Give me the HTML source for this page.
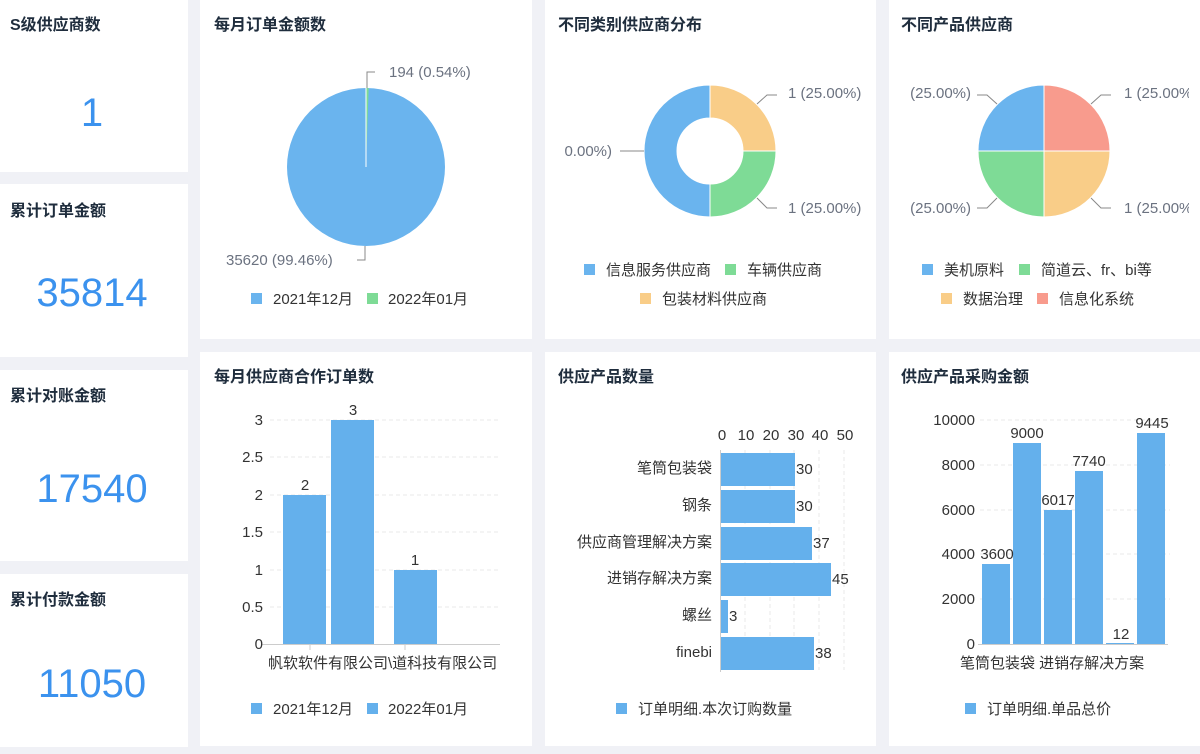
<!DOCTYPE html>
<html><head><meta charset="utf-8"><style>
html,body{margin:0;padding:0;background:#f0f1f6;width:1200px;height:754px;overflow:hidden}
svg{display:block}
text{font-family:"Liberation Sans","Noto Sans CJK SC",sans-serif}
.t{font-size:16px;font-weight:bold;fill:#1f2d3d}
.n{font-size:40px;fill:#3b92ee}
.l{font-size:15px;fill:#6b7280}
.a{font-size:15px;fill:#333}
.g{stroke:#e8e8e8;stroke-dasharray:4 3}
</style></head><body>
<svg width="1200" height="754" xmlns="http://www.w3.org/2000/svg">
<defs>
<clipPath id="c3"><rect x="545" y="0" width="320" height="340"/></clipPath>
<clipPath id="c4"><rect x="900" y="0" width="289" height="340"/></clipPath>
</defs>
<g fill="#fff">
<rect x="0" y="0" width="188" height="172"/>
<rect x="0" y="184" width="188" height="173"/>
<rect x="0" y="370" width="188" height="191"/>
<rect x="0" y="574" width="188" height="173"/>
<rect x="200" y="0" width="332" height="339"/>
<rect x="545" y="0" width="331" height="339"/>
<rect x="889" y="0" width="311" height="339"/>
<rect x="200" y="352" width="332" height="394"/>
<rect x="545" y="352" width="331" height="394"/>
<rect x="889" y="352" width="311" height="394"/>
</g>
<text class="t" x="10" y="30">S级供应商数</text>
<text class="n" x="92" y="126" text-anchor="middle" font-size="50">1</text>
<text class="t" x="10" y="216">累计订单金额</text>
<text class="n" x="92" y="306" text-anchor="middle">35814</text>
<text class="t" x="10" y="401">累计对账金额</text>
<text class="n" x="92" y="502" text-anchor="middle">17540</text>
<text class="t" x="10" y="605">累计付款金额</text>
<text class="n" x="92" y="697" text-anchor="middle">11050</text>

<!-- pie 1 -->
<text class="t" x="214" y="30">每月订单金额数</text>
<circle cx="366" cy="167" r="79" fill="#6ab4ee"/>
<path d="M366 167 L366 88 A79 79 0 0 1 368.7 88 Z" fill="#7edb96"/>
<line x1="366" y1="167" x2="366" y2="88" stroke="#fff"/>
<path d="M367 88 V72 H375" stroke="#888" fill="none"/>
<text class="l" x="389" y="77">194 (0.54%)</text>
<path d="M365 246 V260 H357" stroke="#888" fill="none"/>
<text class="l" x="226" y="265">35620 (99.46%)</text>
<rect x="251" y="293" width="11" height="11" fill="#6ab4ee"/><text class="a" x="273" y="304" fill="#333">2021年12月</text>
<rect x="367" y="293" width="11" height="11" fill="#7edb96"/><text class="a" x="388" y="304">2022年01月</text>

<!-- donut -->
<text class="t" x="558" y="30">不同类别供应商分布</text>
<g clip-path="url(#c3)">
<path d="M710 85 A66 66 0 0 0 710 217 L710 184 A33 33 0 0 1 710 118 Z" fill="#6ab4ee" stroke="#fff"/>
<path d="M710 85 A66 66 0 0 1 776 151 L743 151 A33 33 0 0 0 710 118 Z" fill="#f9cd88" stroke="#fff"/>
<path d="M776 151 A66 66 0 0 1 710 217 L710 184 A33 33 0 0 0 743 151 Z" fill="#7edb96" stroke="#fff"/>
<path d="M757 104 L767 95 H777" stroke="#888" fill="none"/>
<path d="M757 198 L767 208 H777" stroke="#888" fill="none"/>
<path d="M644 151 H620" stroke="#888" fill="none"/>
<text class="l" x="788" y="98">1 (25.00%)</text>
<text class="l" x="788" y="213">1 (25.00%)</text>
<text class="l" x="612" y="156" text-anchor="end">0.00%)</text>
</g>
<rect x="584" y="264" width="11" height="11" fill="#6ab4ee"/><text class="a" x="606" y="275">信息服务供应商</text>
<rect x="725" y="264" width="11" height="11" fill="#7edb96"/><text class="a" x="747" y="275">车辆供应商</text>
<rect x="640" y="293" width="11" height="11" fill="#f9cd88"/><text class="a" x="662" y="304">包装材料供应商</text>

<!-- pie 3 -->
<text class="t" x="901" y="30">不同产品供应商</text>
<g clip-path="url(#c4)">
<path d="M1044 151 V85 A66 66 0 0 0 978 151 Z" fill="#6ab4ee" stroke="#fff"/>
<path d="M1044 151 V85 A66 66 0 0 1 1110 151 Z" fill="#f89b8d" stroke="#fff"/>
<path d="M1044 151 H1110 A66 66 0 0 1 1044 217 Z" fill="#f9cd88" stroke="#fff"/>
<path d="M1044 151 V217 A66 66 0 0 1 978 151 Z" fill="#7edb96" stroke="#fff"/>
<path d="M1091 104 L1101 95 H1111" stroke="#888" fill="none"/>
<path d="M1091 198 L1101 208 H1111" stroke="#888" fill="none"/>
<path d="M997 104 L987 95 H977" stroke="#888" fill="none"/>
<path d="M997 198 L987 208 H977" stroke="#888" fill="none"/>
<text class="l" x="1124" y="98">1 (25.00%)</text>
<text class="l" x="1124" y="213">1 (25.00%)</text>
<text class="l" x="971" y="98" text-anchor="end">(25.00%)</text>
<text class="l" x="971" y="213" text-anchor="end">(25.00%)</text>
</g>
<rect x="922" y="264" width="11" height="11" fill="#6ab4ee"/><text class="a" x="944" y="275">美机原料</text>
<rect x="1019" y="264" width="11" height="11" fill="#7edb96"/><text class="a" x="1041" y="275">简道云、fr、bi等</text>
<rect x="941" y="293" width="11" height="11" fill="#f9cd88"/><text class="a" x="963" y="304">数据治理</text>
<rect x="1037" y="293" width="11" height="11" fill="#f89b8d"/><text class="a" x="1059" y="304">信息化系统</text>

<!-- bar chart 1 -->
<text class="t" x="214" y="382">每月供应商合作订单数</text>
<g class="g"><line x1="270" y1="420" x2="500" y2="420"/><line x1="270" y1="457" x2="500" y2="457"/><line x1="270" y1="495" x2="500" y2="495"/><line x1="270" y1="532" x2="500" y2="532"/><line x1="270" y1="570" x2="500" y2="570"/><line x1="270" y1="607" x2="500" y2="607"/></g>
<line x1="262" y1="644.5" x2="500" y2="644.5" stroke="#ccc"/>
<line x1="310" y1="644" x2="310" y2="650" stroke="#ccc"/><line x1="405" y1="644" x2="405" y2="650" stroke="#ccc"/>
<g class="a" text-anchor="end"><text x="263" y="425">3</text><text x="263" y="462">2.5</text><text x="263" y="500">2</text><text x="263" y="537">1.5</text><text x="263" y="575">1</text><text x="263" y="612">0.5</text><text x="263" y="649">0</text></g>
<g fill="#64b0ec"><rect x="283" y="495" width="43" height="149"/><rect x="331" y="420" width="43" height="224"/><rect x="394" y="570" width="43" height="74"/></g>
<g class="a" text-anchor="middle"><text x="305" y="490">2</text><text x="353" y="415">3</text><text x="415" y="565">1</text></g>
<text class="a" x="268" y="668">帆软软件有限公司</text><text class="a" x="388" y="668">\道科技有限公司</text>
<rect x="251" y="703" width="11" height="11" fill="#64b0ec"/><text class="a" x="273" y="714">2021年12月</text>
<rect x="367" y="703" width="11" height="11" fill="#64b0ec"/><text class="a" x="388" y="714">2022年01月</text>

<!-- horizontal bar -->
<text class="t" x="558" y="382">供应产品数量</text>
<g class="a" text-anchor="middle"><text x="722" y="440">0</text><text x="746" y="440">10</text><text x="771" y="440">20</text><text x="796" y="440">30</text><text x="820" y="440">40</text><text x="845" y="440">50</text></g>
<g class="g"><line x1="745" y1="450" x2="745" y2="670"/><line x1="770" y1="450" x2="770" y2="670"/><line x1="794" y1="450" x2="794" y2="670"/><line x1="819" y1="450" x2="819" y2="670"/><line x1="844" y1="450" x2="844" y2="670"/></g>
<line x1="720.5" y1="450" x2="720.5" y2="672" stroke="#ccc"/>
<g fill="#64b0ec"><rect x="721" y="453" width="74" height="33"/><rect x="721" y="490" width="74" height="33"/><rect x="721" y="527" width="91" height="33"/><rect x="721" y="563" width="110" height="33"/><rect x="721" y="600" width="7" height="33"/><rect x="721" y="637" width="93" height="33"/></g>
<g class="a"><text x="796" y="474">30</text><text x="796" y="511">30</text><text x="813" y="548">37</text><text x="832" y="584">45</text><text x="729" y="621">3</text><text x="815" y="658">38</text></g>
<g class="a" text-anchor="end"><text x="712" y="473">笔筒包装袋</text><text x="712" y="510">钢条</text><text x="712" y="547">供应商管理解决方案</text><text x="712" y="583">进销存解决方案</text><text x="712" y="620">螺丝</text><text x="712" y="657">finebi</text></g>
<rect x="616" y="703" width="11" height="11" fill="#64b0ec"/><text class="a" x="638" y="714">订单明细.本次订购数量</text>

<!-- vertical bar 3 -->
<text class="t" x="901" y="382">供应产品采购金额</text>
<g class="g"><line x1="980" y1="420" x2="1170" y2="420"/><line x1="980" y1="465" x2="1170" y2="465"/><line x1="980" y1="510" x2="1170" y2="510"/><line x1="980" y1="554" x2="1170" y2="554"/><line x1="980" y1="599" x2="1170" y2="599"/></g>
<line x1="978" y1="644.5" x2="1168" y2="644.5" stroke="#ccc"/>
<g class="a" text-anchor="end"><text x="975" y="425">10000</text><text x="975" y="470">8000</text><text x="975" y="515">6000</text><text x="975" y="559">4000</text><text x="975" y="604">2000</text><text x="975" y="649">0</text></g>
<g fill="#64b0ec"><rect x="982" y="564" width="28" height="80"/><rect x="1013" y="443" width="28" height="201"/><rect x="1044" y="510" width="28" height="134"/><rect x="1075" y="471" width="28" height="173"/><rect x="1106" y="643" width="28" height="1"/><rect x="1137" y="433" width="28" height="211"/></g>
<g class="a" text-anchor="middle"><text x="997" y="559">3600</text><text x="1027" y="438">9000</text><text x="1058" y="505">6017</text><text x="1089" y="466">7740</text><text x="1121" y="639">12</text><text x="1152" y="428">9445</text></g>
<text class="a" x="960" y="668">笔筒包装袋 进销存解决方案</text>
<rect x="965" y="703" width="11" height="11" fill="#64b0ec"/><text class="a" x="987" y="714">订单明细.单品总价</text>
</svg>
</body></html>
